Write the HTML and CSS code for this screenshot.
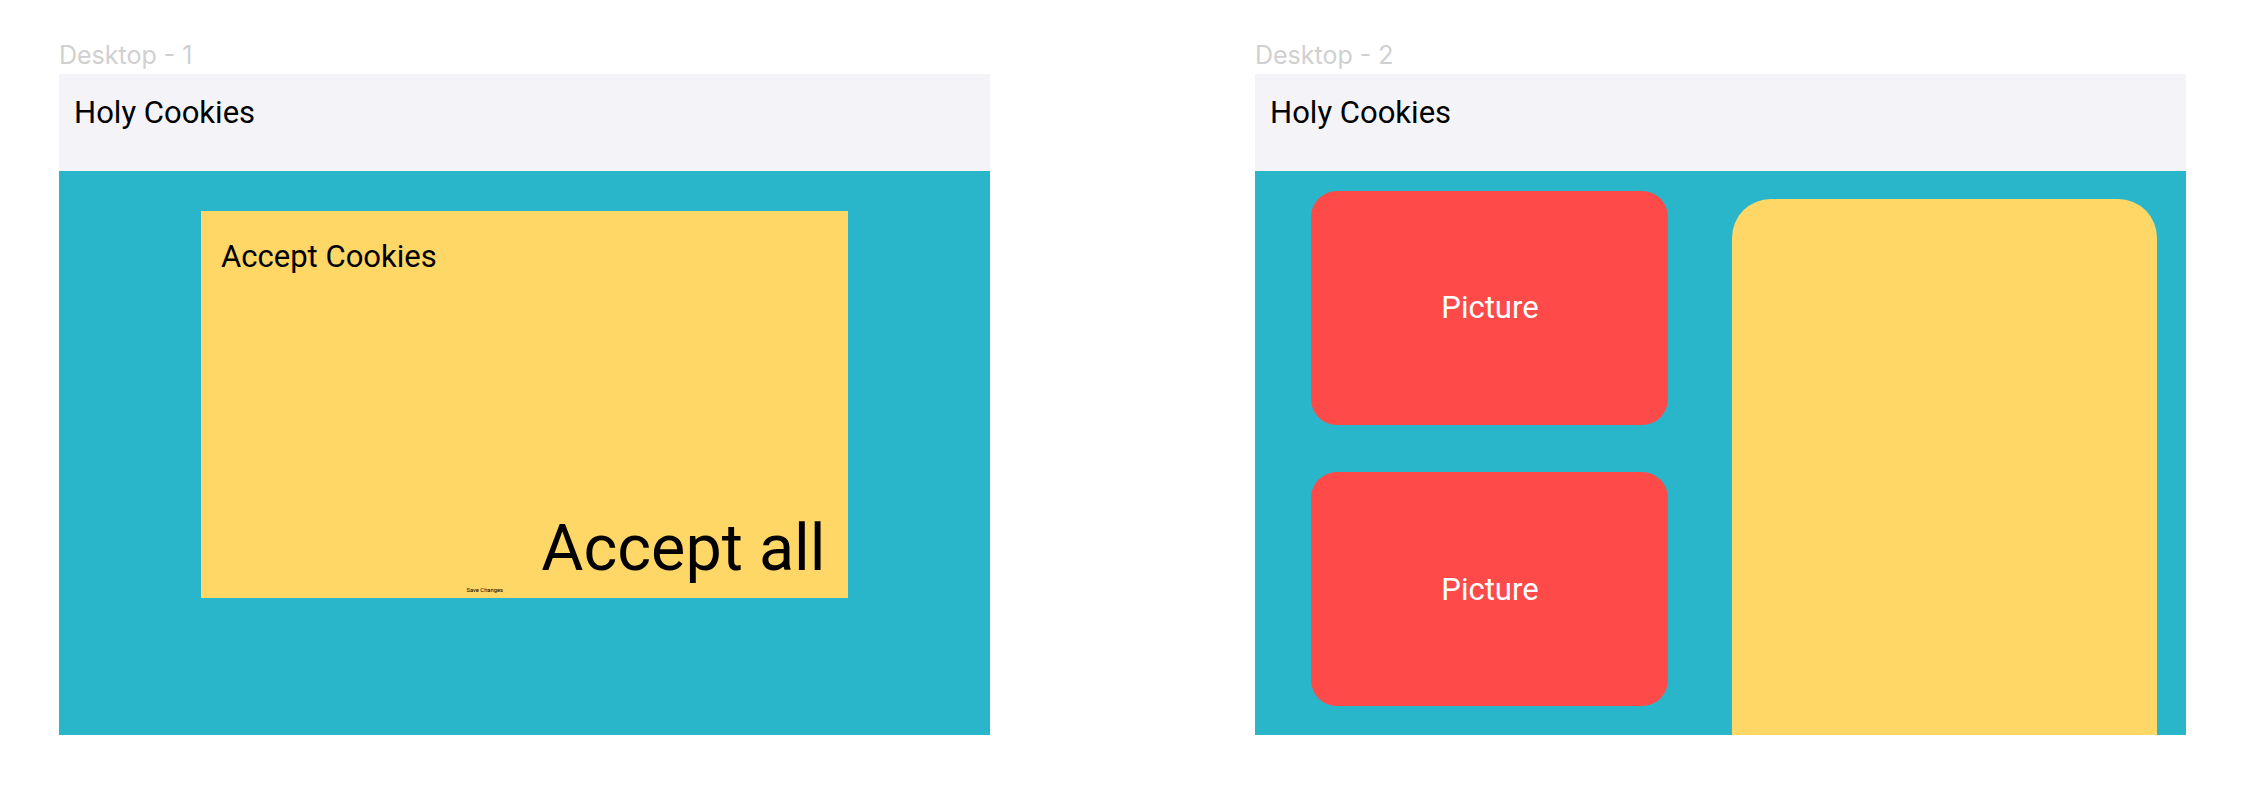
FILE: index.html
```html
<!DOCTYPE html>
<html lang="en">
<head>
<meta charset="utf-8">
<title>Holy Cookies</title>
<link rel="stylesheet" href="styles.css">
</head>
<body>
<main class="board">
  <section class="frame">
    <div class="label">Desktop - 1</div>
    <div class="screen">
      <header class="bar">Holy Cookies</header>
      <div class="consent">
        <h1 class="title">Accept Cookies</h1>
        <div class="accept">Accept all</div>
        <div class="save">Save Changes</div>
      </div>
    </div>
  </section>
  <section class="frame">
    <div class="label">Desktop - 2</div>
    <div class="screen">
      <header class="bar">Holy Cookies</header>
      <div class="content">
        <div class="pictures">
          <div class="picture picture-first">Picture</div>
          <div class="picture">Picture</div>
        </div>
        <div class="panel"></div>
      </div>
    </div>
  </section>
</main>
</body>
</html>
```
FILE: styles.css
```css
* { box-sizing: border-box; }
body { margin: 0; background: #fff; font-family: Roboto, sans-serif; color: #000; }
.board { display: flex; gap: 265px; height: 794px; padding: 40px 0 0 59px; overflow: hidden; }
.frame { width: 931px; flex: none; }
.label { height: 34px; font: 25px/30px Inter, sans-serif; color: #d0d0d0; white-space: nowrap; }
.screen { display: flex; flex-direction: column; height: 661px; background: #2ab6ca; overflow: hidden; }
.bar { flex: none; height: 97px; padding: 20px 15px; background: #f4f4f8; font-size: 31.04px; line-height: 38px; }
.consent { display: flex; flex-direction: column; width: 647px; height: 387px; margin: 40px 0 0 142px; background: #fed766; }
.title { margin: 27px 0 0 20px; font-size: 31.04px; font-weight: 400; line-height: 37px; }
.accept { margin: auto 22.5px 0 auto; font-size: 64.66px; line-height: 76px; }
.save { margin: 1px 0 4px 265.5px; font-size: 5.82px; line-height: 7px; }
.content { display: flex; flex: 1; align-items: flex-start; gap: 64px; padding-left: 56px; }
.pictures { display: flex; flex-direction: column; gap: 47px; padding-top: 20px; }
.picture { display: flex; align-items: center; justify-content: center; width: 357px; height: 234px; padding-left: 1px; border-radius: 26px; background: #fe4a49; color: #fff; font-size: 31.04px; }
.picture-first { padding-bottom: 2px; }
.panel { width: 425px; height: 536px; margin-top: 28px; border-radius: 38.8px 38.8px 0 0; background: #fed766; }
```
